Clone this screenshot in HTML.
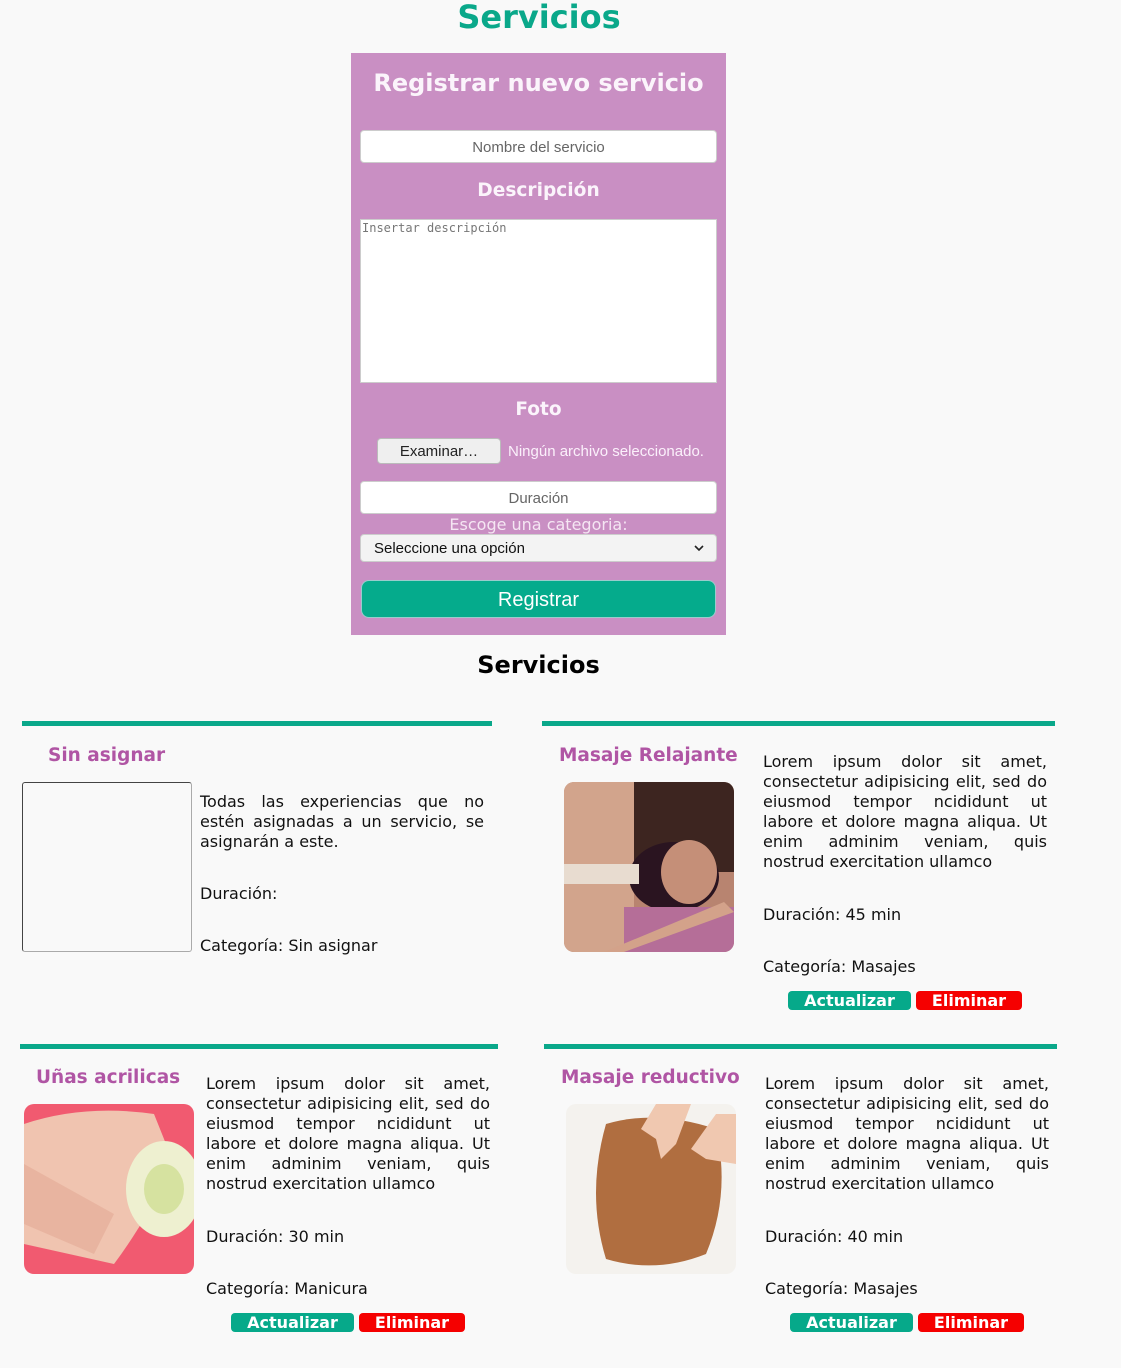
<!DOCTYPE html>
<html><head><meta charset="utf-8">
<style>
*{box-sizing:border-box;margin:0;padding:0}
body{width:1121px;height:1368px;background:#f9f9f9;font-family:"DejaVu Sans","Liberation Sans",sans-serif;position:relative;overflow:hidden}
.a{position:absolute}
.c{text-align:center}
.h1{left:0;width:1078px;top:-2px;font-size:32px;font-weight:bold;color:#0aa88a}
.form{left:351px;top:53px;width:375px;height:582px;background:#c98fc3}
.fw{color:#fbf4fb;font-weight:bold}
.inp{background:#fff;border:1px solid #ccc;border-radius:4px;font-family:"Liberation Sans",sans-serif;font-size:15px;color:#666;text-align:center}
.line{height:5px;background:#0aa88a}
.tt{font-size:18.5px;font-weight:bold;color:#b055a4;white-space:nowrap}
.tx{font-size:16px;line-height:20px;color:#111;text-align:justify;width:284px}
.p{font-size:16px;color:#111;white-space:nowrap}
.img{width:170px;height:170px;border-radius:10px;overflow:hidden}
.b{height:19px;border-radius:4px;color:#fff;font-weight:bold;font-size:16px;line-height:19px;text-align:center}
.g{background:#06a98a;width:123px}.r{background:#f50000;width:106px}
</style></head><body>
<div class="a c h1">Servicios</div>
<div class="a form"></div>
<div class="a c fw" style="left:351px;width:375px;top:69px;font-size:24px">Registrar nuevo servicio</div>
<div class="a inp" style="left:360px;top:130px;width:357px;height:33px;line-height:33px">Nombre del servicio</div>
<div class="a c fw" style="left:351px;width:375px;top:180px;font-size:18.6px">Descripción</div>
<div class="a" style="left:360px;top:219px;width:357px;height:164px;background:#fff;border:1px solid #ccc;font-family:'DejaVu Sans Mono',monospace;font-size:12px;color:#777;padding:1px">Insertar descripción</div>
<div class="a c fw" style="left:351px;width:375px;top:399px;font-size:18.5px">Foto</div>
<div class="a" style="left:377px;top:438px;width:124px;height:26px;background:#efefef;border:1px solid #bbb;border-radius:4px;font-family:'Liberation Sans',sans-serif;font-size:15px;line-height:25px;text-align:center;color:#222">Examinar…</div>
<div class="a" style="left:508px;top:443px;font-family:'Liberation Sans',sans-serif;font-size:15px;color:#fbf0fb">Ningún archivo seleccionado.</div>
<div class="a inp" style="left:360px;top:481px;width:357px;height:33px;line-height:34px">Duración</div>
<div class="a c" style="left:351px;width:375px;top:515px;font-size:16px;color:#f5e6f3">Escoge una categoria:</div>
<div class="a" style="left:360px;top:534px;width:357px;height:28px;background:#f3f3f3;border:1px solid #ccc;border-radius:4px;font-family:'Liberation Sans',sans-serif;font-size:15px;line-height:27px;padding-left:13px;color:#111">Seleccione una opción<svg style="position:absolute;right:12px;top:10px" width="10" height="7"><path d="M1 1 L5 5 L9 1" stroke="#222" stroke-width="1.6" fill="none"/></svg></div>
<div class="a" style="left:361px;top:580px;width:355px;height:38px;background:#05ab8c;border:1px solid #9cc;border-radius:8px;color:#fff;font-family:'Liberation Sans',sans-serif;font-size:20px;line-height:39px;text-align:center">Registrar</div>
<div class="a c" style="left:351px;width:375px;top:651px;font-size:24px;font-weight:bold;color:#000">Servicios</div>

<div class="a line" style="left:22px;top:721px;width:470px"></div>
<div class="a tt" style="left:48px;top:745px">Sin asignar</div>
<div class="a" style="left:22px;top:782px;width:170px;height:170px;border-left:1px solid #444;border-top:1px solid #444;border-bottom:1px solid #aaa;border-right:1px solid #aaa;border-radius:3px"></div>
<div class="a tx" style="left:200px;top:792px">Todas las experiencias que no estén asignadas a un servicio, se asignarán a este.</div>
<div class="a p" style="left:200px;top:884px">Duración:</div>
<div class="a p" style="left:200px;top:936px">Categoría: Sin asignar</div>

<div class="a line" style="left:542px;top:721px;width:513px"></div>
<div class="a tt" style="left:559px;top:745px">Masaje Relajante</div>
<div class="a img" style="left:564px;top:782px">
<svg width="170" height="170"><rect width="170" height="170" fill="#b88470"/><rect x="60" width="110" height="90" fill="#3d2520"/><rect y="0" width="70" height="170" fill="#d2a48c"/><ellipse cx="110" cy="95" rx="45" ry="35" fill="#2a1420"/><ellipse cx="125" cy="90" rx="28" ry="32" fill="#c58f78"/><rect y="82" width="75" height="20" fill="#e8dcd0"/><rect x="60" y="125" width="110" height="45" fill="#b56e98"/><path d="M40 170 L160 120 L170 130 L60 170Z" fill="#d3a28a"/></svg></div>
<div class="a tx" style="left:763px;top:752px">Lorem ipsum dolor sit amet, consectetur adipisicing elit, sed do eiusmod tempor ncididunt ut labore et dolore magna aliqua. Ut enim adminim veniam, quis nostrud exercitation ullamco</div>
<div class="a p" style="left:763px;top:905px">Duración: 45 min</div>
<div class="a p" style="left:763px;top:957px">Categoría: Masajes</div>
<div class="a b g" style="left:788px;top:991px">Actualizar</div>
<div class="a b r" style="left:916px;top:991px">Eliminar</div>

<div class="a line" style="left:20px;top:1044px;width:478px"></div>
<div class="a tt" style="left:36px;top:1067px">Uñas acrilicas</div>
<div class="a img" style="left:24px;top:1104px">
<svg width="170" height="170"><rect width="170" height="170" fill="#f15a70"/><path d="M0 20 Q60 0 130 10 L150 60 Q120 120 90 160 L0 140Z" fill="#f0c4b0"/><path d="M0 60 L90 110 L70 150 L0 120Z" fill="#e8b4a0"/><ellipse cx="140" cy="85" rx="38" ry="48" fill="#eef0d0"/><ellipse cx="140" cy="85" rx="20" ry="25" fill="#d6e2a0"/></svg></div>
<div class="a tx" style="left:206px;top:1074px">Lorem ipsum dolor sit amet, consectetur adipisicing elit, sed do eiusmod tempor ncididunt ut labore et dolore magna aliqua. Ut enim adminim veniam, quis nostrud exercitation ullamco</div>
<div class="a p" style="left:206px;top:1227px">Duración: 30 min</div>
<div class="a p" style="left:206px;top:1279px">Categoría: Manicura</div>
<div class="a b g" style="left:231px;top:1313px">Actualizar</div>
<div class="a b r" style="left:359px;top:1313px">Eliminar</div>

<div class="a line" style="left:544px;top:1044px;width:513px"></div>
<div class="a tt" style="left:561px;top:1067px">Masaje reductivo</div>
<div class="a img" style="left:566px;top:1104px">
<svg width="170" height="170"><rect width="170" height="170" fill="#f4f2ee"/><path d="M40 20 Q90 5 150 25 Q165 90 140 150 Q90 170 40 155 Q20 90 40 20Z" fill="#b06e40"/><path d="M90 0 L125 0 L110 40 L95 55 L90 35 L75 25Z" fill="#f0c8b0"/><path d="M150 10 L170 10 L170 60 L140 55 L125 45Z" fill="#f0c8b0"/></svg></div>
<div class="a tx" style="left:765px;top:1074px">Lorem ipsum dolor sit amet, consectetur adipisicing elit, sed do eiusmod tempor ncididunt ut labore et dolore magna aliqua. Ut enim adminim veniam, quis nostrud exercitation ullamco</div>
<div class="a p" style="left:765px;top:1227px">Duración: 40 min</div>
<div class="a p" style="left:765px;top:1279px">Categoría: Masajes</div>
<div class="a b g" style="left:790px;top:1313px">Actualizar</div>
<div class="a b r" style="left:918px;top:1313px">Eliminar</div>
</body></html>
